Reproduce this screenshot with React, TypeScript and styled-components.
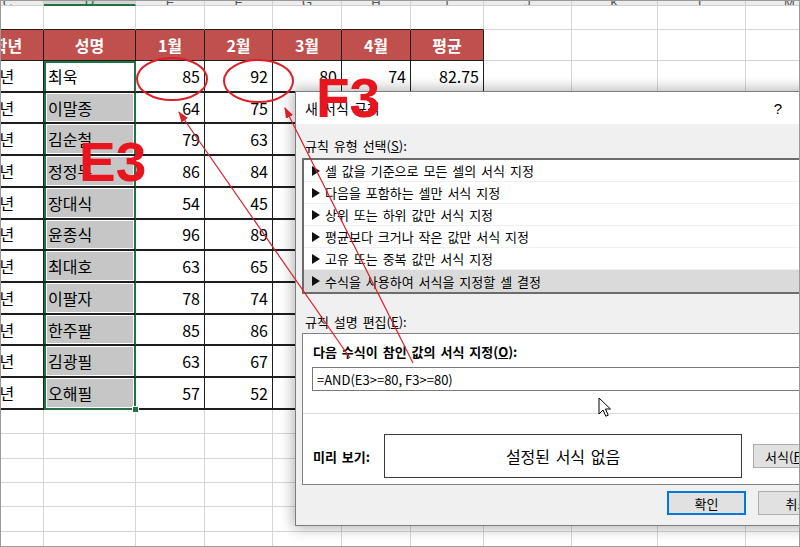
import React from 'react';
import styled, { createGlobalStyle, css } from 'styled-components';

const GlobalStyle = createGlobalStyle`
  html, body { margin: 0; padding: 0; background: #fff; }
  body { font-family: "Noto Sans CJK KR", "Noto Sans", sans-serif; }
  * { box-sizing: border-box; }
`;

const COLS = [
  { id: 'C', w: 72 },
  { id: 'D', w: 92 },
  { id: 'E', w: 69 },
  { id: 'F', w: 68 },
  { id: 'G', w: 69 },
  { id: 'H', w: 69 },
  { id: 'I', w: 73 },
  { id: 'J', w: 88 },
  { id: 'K', w: 86 },
  { id: 'L', w: 88 },
  { id: 'M', w: 88 },
];
const TABLE_COLS = 7;
const HEADERS = ['학년', '성명', '1월', '2월', '3월', '4월', '평균'];

type Rec = { grade: string; name: string; m: [number, number, number, number] };
const DATA: Rec[] = [
  { grade: '3학년', name: '최욱', m: [85, 92, 80, 74] },
  { grade: '3학년', name: '이말종', m: [64, 75, 71, 68] },
  { grade: '3학년', name: '김순철', m: [79, 63, 82, 77] },
  { grade: '3학년', name: '정정무', m: [86, 84, 79, 90] },
  { grade: '3학년', name: '장대식', m: [54, 45, 60, 58] },
  { grade: '3학년', name: '윤종식', m: [96, 89, 92, 94] },
  { grade: '3학년', name: '최대호', m: [63, 65, 70, 66] },
  { grade: '3학년', name: '이팔자', m: [78, 74, 81, 76] },
  { grade: '3학년', name: '한주팔', m: [85, 86, 83, 88] },
  { grade: '3학년', name: '김광필', m: [63, 67, 72, 69] },
  { grade: '3학년', name: '오해필', m: [57, 52, 61, 55] },
];
const EMPTY_ROWS = 6;

const Frame = styled.div`
  position: relative;
  width: 800px;
  height: 547px;
  overflow: hidden;
  border: 1px solid #9a9a9a;
  background: #fff;
`;

const Sheet = styled.div`
  display: grid;
  grid-template-columns: ${COLS.map((c) => `${c.w}px`).join(' ')};
  grid-template-rows: 5px 24px 31px repeat(11, 31.73px) repeat(${EMPTY_ROWS}, 24.4px);
  margin-left: -29px;
  font-family: "Noto Sans CJK KR", sans-serif;
`;

const ColHead = styled.div<{ $active?: boolean }>`
  display: flex;
  justify-content: center;
  align-items: flex-end;
  overflow: hidden;
  background: ${(p) => (p.$active ? '#d4d4d4' : '#ececec')};
  border-right: 1px solid #cfcfcf;
  border-bottom: ${(p) => (p.$active ? '2px solid #217346' : '1px solid #cfcfcf')};
  color: ${(p) => (p.$active ? '#1d6b3a' : '#555')};
  font-family: "Liberation Sans", sans-serif;
  font-size: 13px;
  line-height: 13px;
  & > span { margin-bottom: -4px; }
`;

type Kind = 'blank' | 'head' | 'data';
type Sel = 'first' | 'mid' | 'last';

const selShadow = (sel: Sel, shade: boolean) => {
  const g = '#217346';
  const parts = [`inset 2px 0 0 ${g}`, `inset -1px 0 0 ${g}`];
  if (sel === 'first') parts.push(`inset 0 2px 0 ${g}`);
  if (shade) parts.push('inset 3px 0 0 #fff', 'inset -2px 0 0 #fff', 'inset 0 1px 0 #fff', 'inset 0 -1px 0 #fff');
  return parts.join(', ');
};

const Cell = styled.div<{
  $kind: Kind;
  $align?: 'left' | 'right' | 'center';
  $darkBottom?: boolean;
  $sel?: Sel;
  $shade?: boolean;
}>`
  position: relative;
  display: flex;
  align-items: center;
  white-space: nowrap;
  font-size: 15.5px;
  color: #000;
  padding: 0 4px;
  justify-content: ${(p) => (p.$align === 'right' ? 'flex-end' : p.$align === 'center' ? 'center' : 'flex-start')};
  border-right: 1px solid #d6d6d6;
  border-bottom: 1px solid #d6d6d6;
  ${(p) => p.$darkBottom && css`border-bottom-color: #1e1e1e;`}
  ${(p) =>
    p.$kind === 'head' &&
    css`
      background: #c0504d;
      color: #fff;
      font-weight: 700;
      font-size: 16px;
      border-right-color: #1e1e1e;
      border-bottom-color: #1e1e1e;
    `}
  ${(p) =>
    p.$kind === 'data' &&
    css`
      border-right-color: #1e1e1e;
      border-bottom: 2px solid #1e1e1e;
      font-size: 16px;
    `}
  ${(p) => p.$shade && css`background: #c6c6c6;`}
  ${(p) =>
    p.$sel &&
    css`
      border-right-color: #217346;
      box-shadow: ${selShadow(p.$sel, !!p.$shade)};
      ${p.$sel === 'last' && css`border-bottom-color: #217346;`}
    `}
`;

const FillHandle = styled.span`
  position: absolute;
  right: -4px;
  bottom: -5px;
  width: 7px;
  height: 7px;
  background: #217346;
  border: 1px solid #fff;
  z-index: 2;
`;

/* ---------- Dialog ---------- */

const Dialog = styled.div`
  position: absolute;
  left: 294px;
  top: 90px;
  width: 553px;
  display: flex;
  flex-direction: column;
  border: 1px solid #7d7d7d;
  background: #f0f0f0;
  box-shadow: 0 0 13px 2px rgba(0, 0, 0, 0.3);
  font-family: "Noto Sans CJK KR", sans-serif;
  font-size: 13px;
  color: #000;
  word-spacing: 2px;
  z-index: 2;
`;

const TitleBar = styled.div`
  height: 32px;
  display: flex;
  align-items: center;
  background: #fff;
  padding-left: 9px;
  font-size: 14px;
`;

const TitleText = styled.span`
  flex: 1;
`;

const TitleButton = styled.span`
  width: 46px;
  text-align: center;
  font-size: 15px;
  font-family: "Liberation Sans", sans-serif;
`;

const Body = styled.div`
  display: flex;
  flex-direction: column;
  padding: 0 6px 10px 6px;
`;

const SectionLabel = styled.div<{ $gap: number }>`
  margin: ${(p) => p.$gap}px 0 0 3px;
  line-height: 18px;
`;

const Key = styled.span`
  text-decoration: underline;
`;

const ListBox = styled.div`
  margin-top: 3px;
  border: 2px solid #6c6c6c;
  background: #fff;
  display: flex;
  flex-direction: column;
`;

const ListItem = styled.div<{ $selected?: boolean }>`
  height: 22px;
  display: flex;
  align-items: center;
  padding-left: 8px;
  background: ${(p) => (p.$selected ? '#dadada' : '#fff')};
  border-bottom: 1px solid ${(p) => (p.$selected ? '#dadada' : '#f0f0f0')};
  &:last-child { border-bottom: none; }
`;

const Bullet = styled.span`
  width: 0;
  height: 0;
  border-left: 8px solid #111;
  border-top: 5px solid transparent;
  border-bottom: 5px solid transparent;
  margin-right: 5px;
`;

const GroupBox = styled.div`
  margin-top: 2px;
  border: 1px solid #828282;
  background: #fff;
  display: flex;
  flex-direction: column;
`;

const FormulaSection = styled.div`
  display: flex;
  flex-direction: column;
  padding: 9px 9px 0 9px;
`;

const BoldLabel = styled.div`
  font-weight: 700;
  line-height: 18px;
  padding-left: 1px;
`;

const FormulaInput = styled.div`
  margin-top: 6px;
  height: 24px;
  border: 1px solid #7a7a7a;
  display: flex;
  align-items: center;
  padding-left: 4px;
  word-spacing: 0;
  background: #fff;
`;

const Separator = styled.div`
  margin-top: 22px;
  height: 1px;
  background: #dcdcdc;
`;

const PreviewRow = styled.div`
  display: flex;
  align-items: center;
  padding: 20px 0 6px 10px;
`;

const PreviewLabel = styled.div`
  width: 71px;
  font-weight: 700;
`;

const PreviewBox = styled.div`
  width: 358px;
  height: 44px;
  border: 1px solid #3a3a3a;
  display: flex;
  align-items: center;
  justify-content: center;
  font-size: 16px;
`;

const Button = styled.div<{ $default?: boolean }>`
  width: 79px;
  height: 24px;
  display: flex;
  align-items: center;
  justify-content: center;
  background: #e1e1e1;
  border: ${(p) => (p.$default ? '2px solid #0078d7' : '1px solid #adadad')};
  font-size: 13px;
`;

const FormatButton = styled(Button)`
  width: 75px;
  margin-left: 11px;
`;

const ButtonRow = styled.div`
  margin-top: 6px;
  display: flex;
  justify-content: flex-end;
  gap: 12px;
  padding-right: 4px;
`;

/* ---------- Overlays ---------- */

const AnnotationLayer = styled.svg`
  position: absolute;
  left: -1px;
  top: -1px;
  z-index: 3;
  pointer-events: none;
`;

const BigLabel = styled.span<{ $x: number; $y: number }>`
  position: absolute;
  left: ${(p) => p.$x}px;
  top: ${(p) => p.$y}px;
  font-family: "Liberation Sans", Arial, sans-serif;
  font-weight: 700;
  font-size: 55px;
  line-height: 55px;
  color: #e8141e;
  z-index: 4;
`;

const Pointer = styled.svg`
  position: absolute;
  left: 597px;
  top: 396px;
  z-index: 5;
`;

const LIST_ITEMS = [
  '셀 값을 기준으로 모든 셀의 서식 지정',
  '다음을 포함하는 셀만 서식 지정',
  '상위 또는 하위 값만 서식 지정',
  '평균보다 크거나 작은 값만 서식 지정',
  '고유 또는 중복 값만 서식 지정',
  '수식을 사용하여 서식을 지정할 셀 결정',
];

function fmtAvg(m: number[]) {
  const a = m.reduce((s, v) => s + v, 0) / m.length;
  return String(Math.round(a * 100) / 100);
}

function SheetView() {
  const cells: React.ReactNode[] = [];
  COLS.forEach((c) => {
    cells.push(
      <ColHead key={`h-${c.id}`} $active={c.id === 'D'}>
        <span>{c.id}</span>
      </ColHead>
    );
  });
  COLS.forEach((c, i) => {
    cells.push(<Cell key={`r1-${c.id}`} $kind="blank" $darkBottom={i < TABLE_COLS} />);
  });
  COLS.forEach((c, i) => {
    if (i < TABLE_COLS) {
      cells.push(
        <Cell key={`r2-${c.id}`} $kind="head" $align="center">
          {HEADERS[i]}
        </Cell>
      );
    } else {
      cells.push(<Cell key={`r2-${c.id}`} $kind="blank" />);
    }
  });
  DATA.forEach((r, ri) => {
    const values: (string | number)[] = [r.grade, r.name, ...r.m, fmtAvg(r.m)];
    COLS.forEach((c, i) => {
      if (i >= TABLE_COLS) {
        cells.push(<Cell key={`d${ri}-${c.id}`} $kind="blank" />);
        return;
      }
      const isName = i === 1;
      const sel: Sel | undefined = isName ? (ri === 0 ? 'first' : ri === DATA.length - 1 ? 'last' : 'mid') : undefined;
      cells.push(
        <Cell
          key={`d${ri}-${c.id}`}
          $kind="data"
          $align={i < 2 ? 'left' : 'right'}
          $sel={sel}
          $shade={isName && ri > 0}
        >
          {values[i]}
          {sel === 'last' && <FillHandle />}
        </Cell>
      );
    });
  });
  for (let e = 0; e < EMPTY_ROWS; e++) {
    COLS.forEach((c) => cells.push(<Cell key={`e${e}-${c.id}`} $kind="blank" />));
  }
  return <Sheet>{cells}</Sheet>;
}

function RuleDialog() {
  return (
    <Dialog>
      <TitleBar>
        <TitleText>새 서식 규칙</TitleText>
        <TitleButton>?</TitleButton>
        <TitleButton>✕</TitleButton>
      </TitleBar>
      <Body>
        <SectionLabel $gap={13}>
          규칙 유형 선택(<Key>S</Key>):
        </SectionLabel>
        <ListBox>
          {LIST_ITEMS.map((t, i) => (
            <ListItem key={t} $selected={i === LIST_ITEMS.length - 1}>
              <Bullet />
              {t}
            </ListItem>
          ))}
        </ListBox>
        <SectionLabel $gap={19}>
          규칙 설명 편집(<Key>E</Key>):
        </SectionLabel>
        <GroupBox>
          <FormulaSection>
            <BoldLabel>
              다음 수식이 참인 값의 서식 지정(<Key>O</Key>):
            </BoldLabel>
            <FormulaInput>=AND(E3&gt;=80, F3&gt;=80)</FormulaInput>
          </FormulaSection>
          <Separator />
          <PreviewRow>
            <PreviewLabel>미리 보기:</PreviewLabel>
            <PreviewBox>설정된 서식 없음</PreviewBox>
            <FormatButton>
              서식(<Key>F</Key>)...
            </FormatButton>
          </PreviewRow>
        </GroupBox>
        <ButtonRow>
          <Button $default>확인</Button>
          <Button>취소</Button>
        </ButtonRow>
      </Body>
    </Dialog>
  );
}

function Annotations() {
  const red = '#dc1f28';
  return (
    <AnnotationLayer width={800} height={547} viewBox="0 0 800 547">
      <defs>
        <marker id="ah" markerWidth="11" markerHeight="8" refX="10" refY="4" orient="auto" markerUnits="userSpaceOnUse">
          <path d="M0,0 L11,4 L0,8 Z" fill={red} />
        </marker>
      </defs>
      <ellipse cx={172} cy={79} rx={35} ry={21} fill="none" stroke={red} strokeWidth={2} />
      <ellipse cx={258.5} cy={81} rx={34.5} ry={21} fill="none" stroke={red} strokeWidth={2} />
      <line x1={350} y1={358} x2={179} y2={112} stroke={red} strokeWidth={1.2} markerEnd="url(#ah)" />
      <line x1={413} y1={363} x2={285} y2={108} stroke={red} strokeWidth={1.2} markerEnd="url(#ah)" />
    </AnnotationLayer>
  );
}

export default function App() {
  return (
    <>
      <GlobalStyle />
      <Frame>
        <SheetView />
        <RuleDialog />
        <Annotations />
        <BigLabel $x={78} $y={134}>E3</BigLabel>
        <BigLabel $x={315} $y={70}>F3</BigLabel>
        <Pointer width={14} height={21} viewBox="0 0 14 21">
          <path d="M1,1 L1,17 L5,13 L7.8,19.2 L10.2,18.2 L7.5,12 L12.5,12 Z" fill="#fff" stroke="#000" strokeWidth={1} strokeLinejoin="round" />
        </Pointer>
      </Frame>
    </>
  );
}
